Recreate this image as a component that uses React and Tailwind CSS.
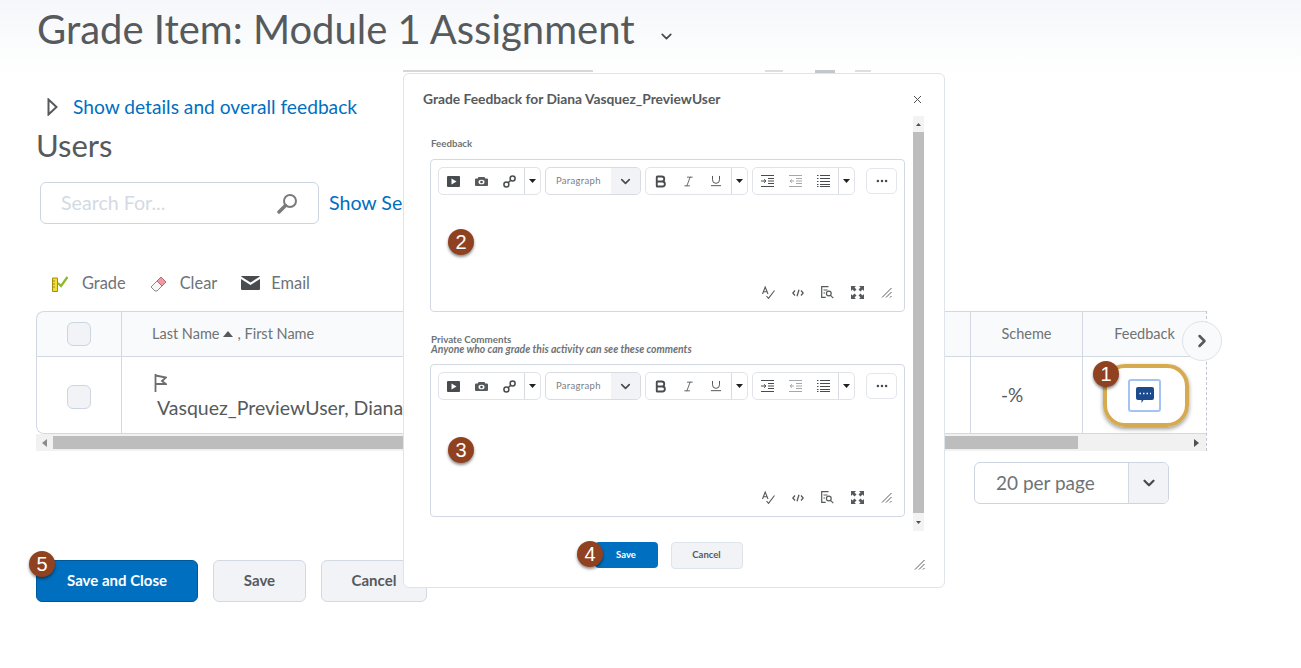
import React from 'react';
import { Bold, ChevronDown, ChevronRight, Ellipsis, Italic, Underline, X } from 'lucide-react';

function Callout({ n, className }) {
  return (
    <div className={`absolute z-30 flex h-[26px] w-[26px] items-center justify-center rounded-full bg-[#8f4120] font-['Liberation_Sans',sans-serif] text-[20px] leading-none text-white shadow-[0_2px_3px_rgba(0,0,0,0.45)] ${className}`}>
      {n}
    </div>
  );
}

function Caret() {
  return (
    <svg width="7" height="4" viewBox="0 0 7 4" className="fill-[#202122]">
      <path d="M0 0h7L3.5 4z" />
    </svg>
  );
}

function VideoIcon() {
  return (
    <svg width="13" height="11" viewBox="0 0 13 11">
      <rect width="13" height="11" rx="1" fill="#494c4e" />
      <path d="M4.5 2.5v6l5-3z" fill="#fff" />
    </svg>
  );
}

function CameraIcon() {
  return (
    <svg width="13" height="9" viewBox="0 0 13 9">
      <path d="M3.500 0h6l.8 1.500H12a1 1 0 0 1 1 1V8a1 1 0 0 1-1 1H1a1 1 0 0 1-1-1V2.500a1 1 0 0 1 1-1h1.700z" fill="#565a5c" />
      <ellipse cx="6.500" cy="5" rx="3" ry="2.300" fill="#fff" />
      <circle cx="6.500" cy="5" r="1.300" fill="#494c4e" />
    </svg>
  );
}

function LinkIcon() {
  return (
    <svg width="13" height="13" viewBox="0 0 13 13" fill="none" stroke="#494c4e" strokeWidth="1.5">
      <circle cx="3.400" cy="9.600" r="2.500" />
      <circle cx="9.600" cy="3.400" r="2.500" />
      <path d="M5.200 7.800l2.600-2.600" />
    </svg>
  );
}

function IndentIcon({ dir, light }) {
  const c = light ? '#a5a8ab' : '#494c4e';
  return (
    <svg width="13" height="12" viewBox="0 0 13 12" fill="none" stroke={c} strokeWidth="1">
      <path d="M0 .5h13M7 3.500h6M7 6h6M7 8.500h6M0 11.500h13" />
      <path d={dir === 'in' ? 'M0 6h4M3 4.300L5 6 3 7.700' : 'M1 6h4M3 4.300L1 6l2 1.700'} />
    </svg>
  );
}

function ListIcon() {
  return (
    <svg width="13" height="12" viewBox="0 0 13 12" fill="none" stroke="#494c4e" strokeWidth="1">
      <path d="M3 .5h10M3 3.500h10M3 6.500h10M3 9.500h10M3 11.500h10M0 .5h1.500M0 3.500h1.500M0 6.500h1.500M0 9.500h1.500M0 11.500h1.500" />
    </svg>
  );
}

function GripIcon() {
  return (
    <svg width="11" height="11" viewBox="0 0 11 11" fill="none" stroke="#565a5c" strokeWidth="1">
      <path d="M1 10.500L10.500 1M5 10.500L10.500 5M9 10.500l1.500-1.500" />
    </svg>
  );
}

function BottomIcons() {
  return (
    <div className="absolute bottom-[12px] right-[12px] flex items-center gap-[17px]">
      <svg width="13" height="13" viewBox="0 0 13 13" fill="none" stroke="#565a5c" strokeWidth="1.100">
        <path d="M.5 8L3.200 1 6 8M1.500 5.800h3.400M4.500 10l2 2.400L12.500 4.500" />
      </svg>
      <svg width="12" height="8" viewBox="0 0 12 8" fill="none" stroke="#565a5c" strokeWidth="1.300">
        <path d="M3 1.500L.8 4 3 6.500M9 1.500L11.200 4 9 6.500M7 .8L5 7.200" />
      </svg>
      <svg width="13" height="13" viewBox="0 0 13 13" fill="none" stroke="#565a5c" strokeWidth="1.200">
        <path d="M7.500.7H.7v10.600h4M2.500 4h4M2.500 7h1.500" />
        <circle cx="7.800" cy="7.500" r="2.400" />
        <path d="M9.500 9.300l2.800 2.800" />
      </svg>
      <svg width="13" height="13" viewBox="0 0 13 13" fill="#565a5c">
        <path d="M0 0h5L3.500 1.500 5.500 3.500 3.500 5.500 1.500 3.500 0 5zM13 0v5L11.500 3.500 9.500 5.500 7.500 3.500 9.500 1.500 8 0zM0 13V8L1.500 9.500 3.500 7.500 5.500 9.500 3.500 11.500 5 13zM13 13H8L9.500 11.500 7.500 9.500 9.500 7.500 11.500 9.500 13 8z" />
      </svg>
      <GripIcon />
    </div>
  );
}

function Tool({ children }) {
  return <div className="flex h-full w-[28px] items-center justify-center text-[#494c4e]">{children}</div>;
}

function ToolGroup({ children }) {
  return (
    <div className="flex h-[28px] w-[103px] items-center rounded-[5px] border border-[#e0e3e8] bg-white">
      {children}
      <div className="ml-auto flex h-full w-[16px] items-center justify-center border-l border-[#d8dbe0]">
        <Caret />
      </div>
    </div>
  );
}

function Editor() {
  return (
    <div className="relative h-[153px] w-[475px] rounded-[4px] border border-[#d3d9e3] bg-white px-[7px] pt-[7px]">
      <div className="flex items-center gap-[4px]">
        <ToolGroup>
          <Tool><VideoIcon /></Tool>
          <Tool><CameraIcon /></Tool>
          <Tool><LinkIcon /></Tool>
        </ToolGroup>
        <div className="flex h-[28px] w-[96px] items-center overflow-hidden rounded-[5px] border border-[#d8dbe0] bg-white">
          <span className="flex-1 pl-[10px] text-[9.5px] tracking-[0.3px] text-[#7b8086]">Paragraph</span>
          <span className="flex h-full w-[29px] items-center justify-center bg-[#f1f3f6]">
            <ChevronDown size={15} strokeWidth={2.600} className="text-[#494c4e]" />
          </span>
        </div>
        <ToolGroup>
          <Tool><Bold size={15} strokeWidth={3} /></Tool>
          <Tool><Italic size={13} strokeWidth={1.500} /></Tool>
          <Tool><Underline size={14} strokeWidth={1.600} /></Tool>
        </ToolGroup>
        <ToolGroup>
          <Tool><IndentIcon dir="in" /></Tool>
          <Tool><IndentIcon dir="out" light /></Tool>
          <Tool><ListIcon /></Tool>
        </ToolGroup>
        <div className="ml-[7px] flex h-[26px] w-[31px] items-center justify-center rounded-[5px] border border-[#e3e6eb] bg-white text-[#494c4e]">
          <Ellipsis size={14} strokeWidth={2.400} />
        </div>
      </div>
      <BottomIcons />
    </div>
  );
}

function FeedbackDialog() {
  return (
    <div className="absolute left-[403px] top-[73px] z-20 flex h-[515px] w-[542px] flex-col rounded-[6px] border border-[#dfe3ea] bg-white">
      <div className="flex h-[42px] shrink-0 items-center justify-between pl-[19px] pr-[20px] pt-[8px]">
        <h2 className="text-[13.8px] font-bold text-[#565a5c]">Grade Feedback for Diana Vasquez_PreviewUser</h2>
        <X size={13} strokeWidth={1.800} className="text-[#494c4e]" />
      </div>
      <div className="flex h-[415px] shrink-0">
        <div className="w-[509px] pl-[26px]">
          <div className="pl-[1px] pt-[20px] text-[9.7px] font-bold leading-[14px] text-[#6e7376]">Feedback</div>
          <div className="mt-[9px]"><Editor /></div>
          <div className="mt-[22px] pl-[1px] text-[9.8px] font-bold leading-[10px] text-[#6e7376]">Private Comments</div>
          <div className="pl-[1px] text-[10.4px] font-bold italic leading-[10px] text-[#6e7376]">Anyone who can grade this activity can see these comments</div>
          <div className="mt-[10px]"><Editor /></div>
        </div>
        <div className="flex w-[11px] flex-col bg-[#f3f3f3]">
          <div className="flex h-[16px] items-center justify-center">
            <svg width="5" height="3" viewBox="0 0 5 3" fill="#505050"><path d="M0 3h5L2.500 0z" /></svg>
          </div>
          <div className="h-[381px] bg-[#bdbdbd]" />
          <div className="flex flex-1 items-center justify-center">
            <svg width="5" height="3" viewBox="0 0 5 3" fill="#505050"><path d="M0 0h5L2.500 3z" /></svg>
          </div>
        </div>
      </div>
      <div className="relative flex flex-1 justify-center gap-[13px] pr-[11px] pt-[11px]">
        <button className="h-[26px] w-[63px] rounded-[4px] bg-[#006fbf] text-[9.5px] font-bold text-white">Save</button>
        <button className="h-[27px] w-[72px] rounded-[4px] border border-[#dfe3ea] bg-[#f1f3f6] text-[9.5px] font-bold text-[#565a5c]">Cancel</button>
        <div className="absolute bottom-[17px] right-[19px]"><GripIcon /></div>
      </div>
    </div>
  );
}

export default function App() {
  return (
    <div className="relative h-[668px] w-[1301px] overflow-hidden bg-white font-['Lato',sans-serif] text-[#565a5c]">
      <div className="bg-gradient-to-b from-[#f5f7fa] to-white pl-[37px]">
        <div className="flex h-[73px] items-start pt-[4px]">
          <h1 className="text-[40px] leading-[50px]">Grade Item: Module 1 Assignment</h1>
          <ChevronDown size={17} strokeWidth={2.500} className="ml-[23px] mt-[24px] text-[#494c4e]" />
        </div>
      </div>

      <div className="pl-[36px]">
        <div className="flex h-[48px] items-center pt-[20px]">
          <svg width="11" height="18" viewBox="0 0 11 18" fill="none" stroke="#565a5c" strokeWidth="2" className="ml-[11px]">
            <path d="M1.500 1.500v15L9.500 9z" />
          </svg>
          <a className="ml-[15px] text-[19.2px] text-[#006fbf]">Show details and overall feedback</a>
        </div>
        <div className="mt-[5px] text-[31px] leading-[38px]">Users</div>

        <div className="mt-[18px] flex items-center pl-[4px]">
          <div className="flex h-[42px] w-[279px] items-center justify-between rounded-[6px] border border-[#cdd5e0] bg-white pl-[20px] pr-[20px]">
            <span className="text-[19.6px] text-[#d4dae3]">Search For...</span>
            <svg width="21" height="21" viewBox="0 0 21 21" fill="none">
              <circle cx="13" cy="8" r="6" stroke="#7a7a7a" strokeWidth="2" />
              <path d="M8.500 12.500L2 19" stroke="#7a7a7a" strokeWidth="3.500" strokeLinecap="round" />
            </svg>
          </div>
          <a className="ml-[10px] text-[19.6px] text-[#006fbf]">Show Search Options</a>
        </div>

        <div className="mt-[47px] flex h-[24px] items-center pl-[16px] text-[16.4px] text-[#6e7376]">
          <svg width="16" height="17" viewBox="0 0 16 17" fill="none">
            <path d="M.5 3h5v13.500h-5z" fill="#f2dc3a" stroke="#a08f10" />
            <path d="M1 6h2M1 9h2M1 12h2" stroke="#a08f10" />
            <path d="M6 8l3 3 6.500-9" stroke="#8cb82b" strokeWidth="2.200" />
          </svg>
          <span className="ml-[14px]">Grade</span>
          <svg width="17" height="17" viewBox="0 0 17 17" className="ml-[24px]">
            <path d="M5 16L1 12 11 2l5 5-6 6-3 3z" fill="#f7f7f7" stroke="#8a8a8a" />
            <path d="M7 6l4-4 5 5-4 4z" fill="#ef9aa0" stroke="#b86a70" />
          </svg>
          <span className="ml-[13px]">Clear</span>
          <svg width="19" height="14" viewBox="0 0 19 14" className="ml-[24px]">
            <path d="M1 0h17a1 1 0 0 1 .9.6L9.500 6.500.1.600A1 1 0 0 1 1 0z" fill="#494c4e" />
            <path d="M0 3l9.500 6L19 3v10a1 1 0 0 1-1 1H1a1 1 0 0 1-1-1z" fill="#494c4e" />
          </svg>
          <span className="ml-[11px]">Email</span>
        </div>

        <div className="mt-[16px] w-[1171px] border-r border-dashed border-[#c0c6d0]">
          <div className="flex h-[46px] rounded-tl-[8px] border border-r-0 border-[#d3d9e3] bg-[#f9fafb] text-[14.5px] text-[#6e7376]">
            <div className="flex w-[85px] items-center justify-center border-r border-[#d3d9e3]">
              <div className="h-[24px] w-[24px] rounded-[6px] border border-[#cdd5e0] bg-[#f1f3f6]" />
            </div>
            <div className="flex flex-1 items-center pb-[1px] pl-[30px]">
              Last Name
              <svg width="10" height="6" viewBox="0 0 10 6" className="mx-[4px] fill-[#565a5c]"><path d="M0 6h10L5 0z" /></svg>
              , First Name
            </div>
            <div className="flex w-[112px] items-center justify-center border-l border-[#d3d9e3] pb-[1px]">Scheme</div>
            <div className="flex w-[124px] items-center justify-center border-l border-[#d3d9e3] pb-[1px]">Feedback</div>
          </div>
          <div className="flex h-[77px] rounded-bl-[8px] border border-t-0 border-r-0 border-[#d3d9e3]">
            <div className="flex w-[85px] items-center justify-center border-r border-[#d3d9e3]">
              <div className="mt-[4px] h-[24px] w-[24px] rounded-[6px] border border-[#cdd5e0] bg-[#f1f3f6]" />
            </div>
            <div className="flex-1 pl-[32px] pt-[17px]">
              <svg width="13" height="18" viewBox="0 0 13 18" fill="none" stroke="#6a6e70" strokeWidth="1.800">
                <path d="M1.500 0v18M1.500 1.500L12 3.500 8 7l4 3-10.500 0" />
              </svg>
              <div className="ml-[3px] mt-[2px] whitespace-nowrap text-[19.5px] leading-[28px]">Vasquez_PreviewUser, Diana</div>
            </div>
            <div className="flex w-[112px] items-center border-l border-[#d3d9e3] pl-[30px] text-[19px]">-%</div>
            <div className="flex w-[124px] items-center justify-center border-l border-[#d3d9e3]">
              <div className="flex h-[33px] w-[33px] items-center justify-center rounded-[3px] border-2 border-[#a3c3f5] bg-white">
                <svg width="18" height="18" viewBox="0 0 18 18">
                  <path d="M2 1h14a2 2 0 0 1 2 2v9a2 2 0 0 1-2 2H7.500L5.500 17v-3H2a2 2 0 0 1-2-2V3a2 2 0 0 1 2-2z" fill="#1c4a8e" />
                  <path d="M3.500 7.500h1.500M7 7.500h1.500M10.500 7.500h1.500M14 7.500h1" stroke="#fff" strokeWidth="1.500" />
                </svg>
              </div>
            </div>
          </div>
          <div className="flex h-[17px] items-center bg-[#f1f1f1]">
            <svg width="5" height="8" viewBox="0 0 5 8" fill="#8a8a8a" className="ml-[6px]"><path d="M5 0v8L0 4z" /></svg>
            <div className="ml-[6px] h-[13px] w-[1025px] bg-[#bdbdbd]" />
            <svg width="5" height="8" viewBox="0 0 5 8" fill="#505050" className="ml-auto mr-[7px]"><path d="M0 0v8l5-4z" /></svg>
          </div>
        </div>

        <div className="mt-[11px] flex justify-end pr-[132px]">
          <div className="flex h-[42px] w-[195px] overflow-hidden rounded-[6px] border border-[#cdd5e0] bg-white">
            <span className="flex flex-1 items-center pl-[21px] text-[19px] text-[#6e7376]">20 per page</span>
            <span className="flex w-[40px] items-center justify-center border-l border-[#d3d9e3] bg-[#f1f3f6]">
              <ChevronDown size={18} strokeWidth={3} className="text-[#494c4e]" />
            </span>
          </div>
        </div>

        <div className="mt-[56px] flex gap-[15px]">
          <button className="h-[42px] w-[162px] rounded-[6px] border border-[#00589a] bg-[#006fbf] pb-[2px] text-[15px] font-bold text-white">Save and Close</button>
          <button className="h-[42px] w-[93px] rounded-[6px] border border-[#d3d9e3] bg-[#f1f3f6] pb-[2px] text-[15px] font-bold text-[#565a5c]">Save</button>
          <button className="h-[42px] w-[106px] rounded-[6px] border border-[#d3d9e3] bg-[#f1f3f6] pb-[2px] text-[15px] font-bold text-[#565a5c]">Cancel</button>
        </div>
      </div>

      {/* bit of the page title row that peeks out above the dialog */}
      <div className="absolute left-[403px] top-[70px] z-10 flex h-[3px] w-[542px] items-start gap-[4px] text-[#b9bcbf]">
        <span className="h-[2px] w-[190px] bg-[#d5d7da]" />
        <span className="ml-[168px] h-[2px] w-[18px] bg-[#dcdee0]" />
        <span className="ml-[28px] h-[3px] w-[20px] bg-[#c4c7ca]" />
        <span className="ml-[16px] h-[2px] w-[16px] bg-[#dcdee0]" />
      </div>

      <FeedbackDialog />

      {/* overlays on the screenshot */}
      <div className="absolute left-[1103px] top-[364px] z-10 h-[63px] w-[86px] rounded-[22px] border-[4px] border-[#d6aa4f] shadow-[0_2px_4px_rgba(0,0,0,0.4)]" />
      <div className="absolute left-[1182px] top-[321px] z-10 flex h-[40px] w-[40px] items-center justify-center rounded-full border border-[#dfe3ea] bg-[#f9fafb]">
        <ChevronRight size={20} strokeWidth={3} className="text-[#565a5c]" />
      </div>
      <Callout n={1} className="left-[1093px] top-[361px]" />
      <Callout n={2} className="left-[448px] top-[229px]" />
      <Callout n={3} className="left-[448px] top-[437px]" />
      <Callout n={4} className="left-[577px] top-[541px]" />
      <Callout n={5} className="left-[29px] top-[551px]" />
    </div>
  );
}
